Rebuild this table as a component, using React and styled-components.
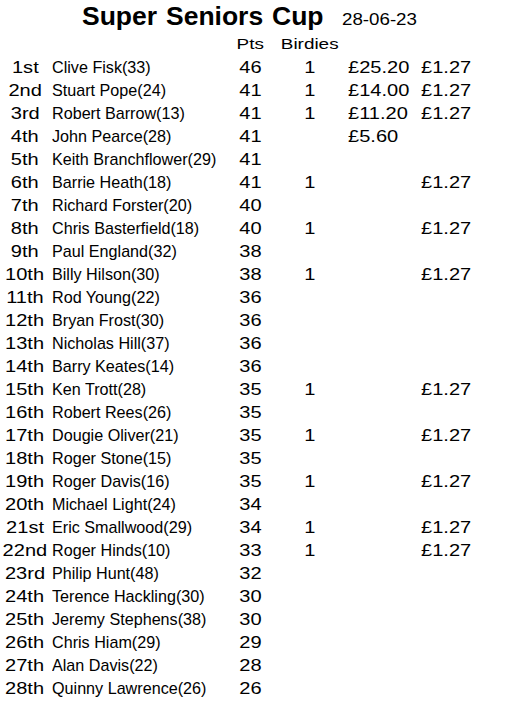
import React from "react";
import styled, { createGlobalStyle } from "styled-components";

const GlobalStyle = createGlobalStyle`
  html, body { margin: 0; padding: 0; background: #ffffff; }
  body { font-family: "Liberation Sans", Arial, sans-serif; color: #000; }
`;

const Sheet = styled.div`
  width: 509px;
  display: flex;
  flex-direction: column;
`;

const TitleBar = styled.div`
  height: 33px;
  display: flex;
  align-items: baseline;
  gap: 18px;
  padding-left: 82px;
  line-height: 33px;
  white-space: nowrap;
`;

const Title = styled.h1`
  margin: 0;
  font-size: 26.5px;
  font-weight: bold;
  word-spacing: 1.5px;
  line-height: 33px;
`;

const DateText = styled.span`
  font-size: 16.3px;
  display: inline-block;
  transform: scaleX(1.15);
  transform-origin: left center;
`;

const Row = styled.div`
  display: grid;
  grid-template-columns: 50px 175px 50px 70px 73px 1fr;
  height: ${(p) => p.$h}px;
  line-height: ${(p) => p.$lh}px;
  white-space: nowrap;
`;

const Cell = styled.div`
  text-align: ${(p) => p.$align || "left"};
  padding-left: ${(p) => p.$pad || 0}px;
  font-size: ${(p) => p.$size || 17}px;
`;

const Stretch = styled.span`
  display: inline-block;
  transform: scaleX(${(p) => p.$sx});
  transform-origin: ${(p) => (p.$origin === "left" ? "left center" : "center center")};
`;

const rows = [
  ["1st", "Clive Fisk(33)", "46", "1", "£25.20", "£1.27"],
  ["2nd", "Stuart Pope(24)", "41", "1", "£14.00", "£1.27"],
  ["3rd", "Robert Barrow(13)", "41", "1", "£11.20", "£1.27"],
  ["4th", "John Pearce(28)", "41", "", "£5.60", ""],
  ["5th", "Keith Branchflower(29)", "41", "", "", ""],
  ["6th", "Barrie Heath(18)", "41", "1", "", "£1.27"],
  ["7th", "Richard Forster(20)", "40", "", "", ""],
  ["8th", "Chris Basterfield(18)", "40", "1", "", "£1.27"],
  ["9th", "Paul England(32)", "38", "", "", ""],
  ["10th", "Billy Hilson(30)", "38", "1", "", "£1.27"],
  ["11th", "Rod Young(22)", "36", "", "", ""],
  ["12th", "Bryan Frost(30)", "36", "", "", ""],
  ["13th", "Nicholas Hill(37)", "36", "", "", ""],
  ["14th", "Barry Keates(14)", "36", "", "", ""],
  ["15th", "Ken Trott(28)", "35", "1", "", "£1.27"],
  ["16th", "Robert Rees(26)", "35", "", "", ""],
  ["17th", "Dougie Oliver(21)", "35", "1", "", "£1.27"],
  ["18th", "Roger Stone(15)", "35", "", "", ""],
  ["19th", "Roger Davis(16)", "35", "1", "", "£1.27"],
  ["20th", "Michael Light(24)", "34", "", "", ""],
  ["21st", "Eric Smallwood(29)", "34", "1", "", "£1.27"],
  ["22nd", "Roger Hinds(10)", "33", "1", "", "£1.27"],
  ["23rd", "Philip Hunt(48)", "32", "", "", ""],
  ["24th", "Terence Hackling(30)", "30", "", "", ""],
  ["25th", "Jeremy Stephens(38)", "30", "", "", ""],
  ["26th", "Chris Hiam(29)", "29", "", "", ""],
  ["27th", "Alan Davis(22)", "28", "", "", ""],
  ["28th", "Quinny Lawrence(26)", "26", "", "", ""],
];

const SX = 1.18;

export default function App() {
  return (
    <>
      <GlobalStyle />
      <Sheet>
        <TitleBar>
          <Title>Super Seniors Cup</Title>
          <DateText>28-06-23</DateText>
        </TitleBar>
        <Row $h={23} $lh={21}>
          <Cell />
          <Cell />
          <Cell $align="center" $size={15.5}>
            <Stretch $sx={1.22}>Pts</Stretch>
          </Cell>
          <Cell $align="center" $size={15.5}>
            <Stretch $sx={1.22}>Birdies</Stretch>
          </Cell>
          <Cell />
          <Cell />
        </Row>
        {rows.map(([pos, name, pts, bird, prize, bprize]) => (
          <Row key={pos} $h={23} $lh={23}>
            <Cell $align="center">
              <Stretch $sx={SX}>{pos}</Stretch>
            </Cell>
            <Cell $pad={2}>
              <Stretch $sx={0.95} $origin="left">{name}</Stretch>
            </Cell>
            <Cell $align="center">
              <Stretch $sx={SX}>{pts}</Stretch>
            </Cell>
            <Cell $align="center">
              <Stretch $sx={SX}>{bird}</Stretch>
            </Cell>
            <Cell $pad={3}>
              <Stretch $sx={SX} $origin="left">{prize}</Stretch>
            </Cell>
            <Cell $pad={3}>
              <Stretch $sx={SX} $origin="left">{bprize}</Stretch>
            </Cell>
          </Row>
        ))}
      </Sheet>
    </>
  );
}
